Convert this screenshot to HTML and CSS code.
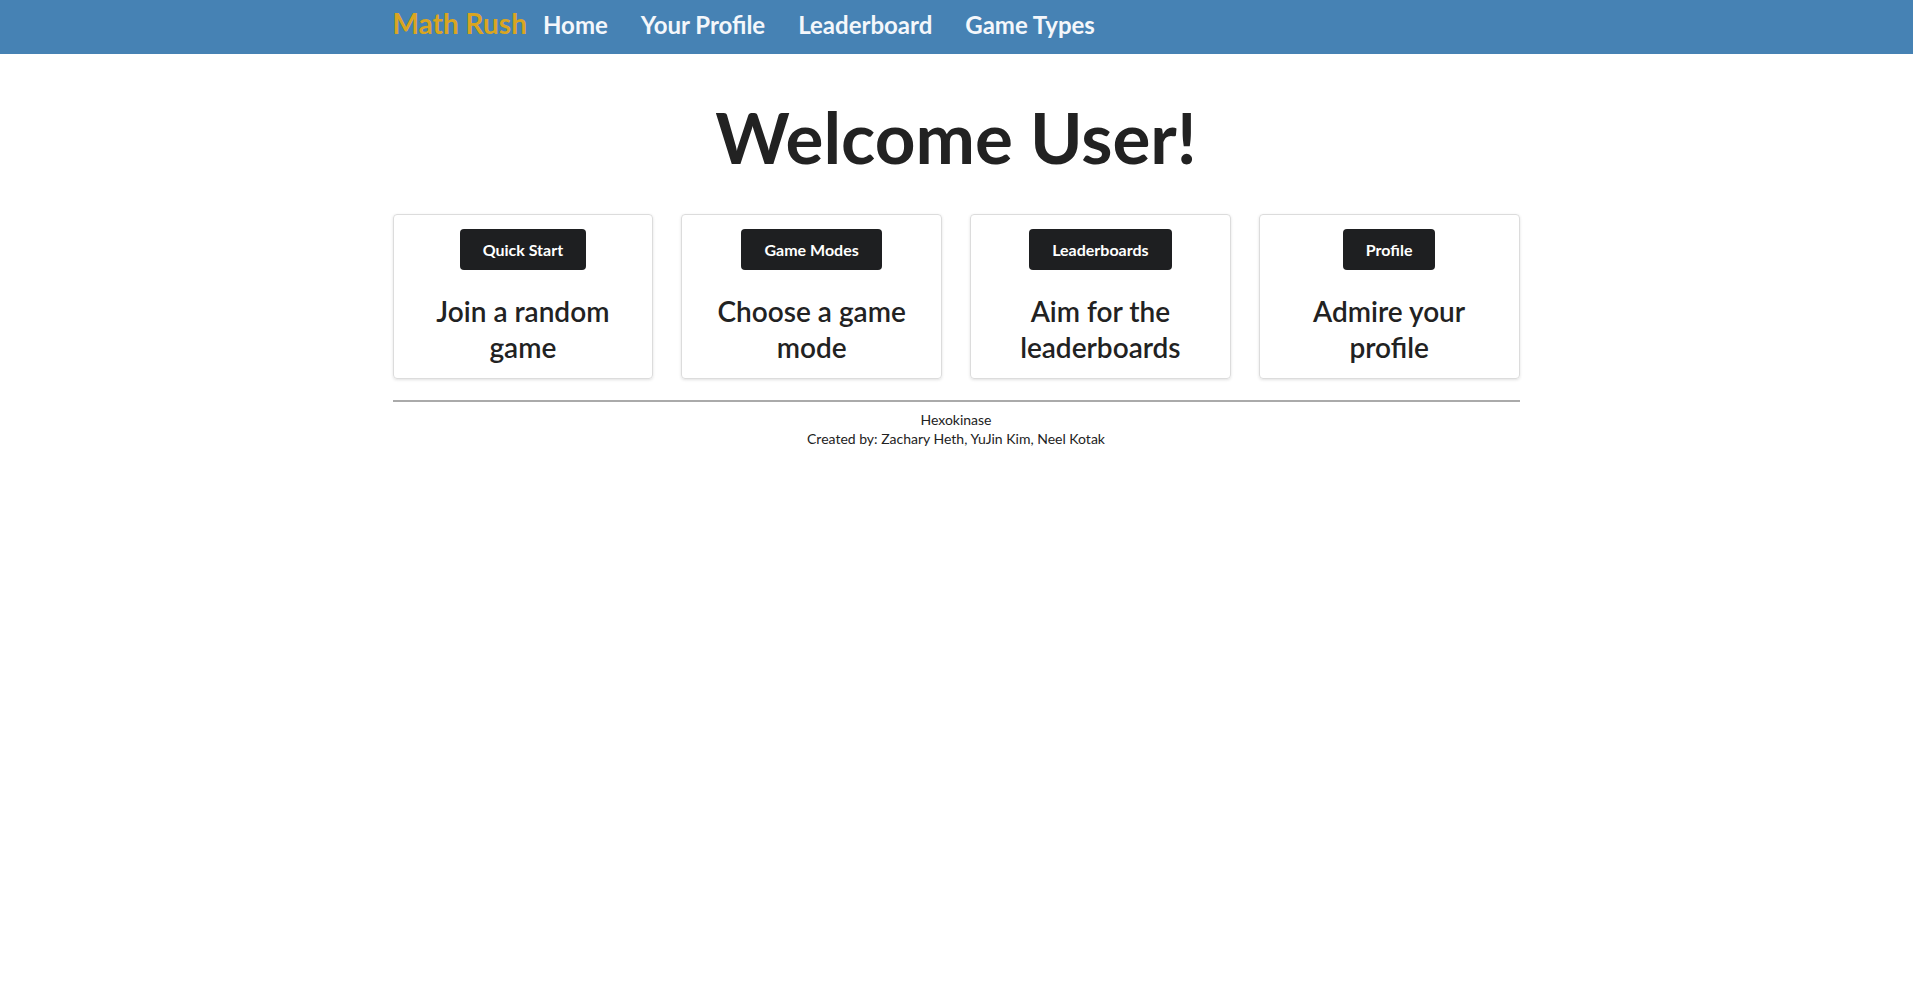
FILE: index.html
```html
<!DOCTYPE html>
<html lang="en">
<head>
<meta charset="utf-8">
<title>Math Rush</title>
<link rel="stylesheet" href="styles.css">
</head>
<body>
<nav class="navbar">
  <div class="container nav-inner">
    <a class="brand" href="#">Math Rush</a>
    <a class="nav-link" href="#">Home</a>
    <a class="nav-link" href="#">Your Profile</a>
    <a class="nav-link" href="#">Leaderboard</a>
    <a class="nav-link" href="#">Game Types</a>
  </div>
</nav>
<main class="container">
  <h1 class="title">Welcome User!</h1>
  <div class="cards">
    <div class="card">
      <button class="btn">Quick Start</button>
      <h3 class="card-text">Join a random game</h3>
    </div>
    <div class="card">
      <button class="btn">Game Modes</button>
      <h3 class="card-text">Choose a game mode</h3>
    </div>
    <div class="card">
      <button class="btn">Leaderboards</button>
      <h3 class="card-text">Aim for the leaderboards</h3>
    </div>
    <div class="card">
      <button class="btn">Profile</button>
      <h3 class="card-text">Admire your profile</h3>
    </div>
  </div>
  <hr class="rule">
  <footer class="footer">
    <div>Hexokinase</div>
    <div>Created by: Zachary Heth, YuJin Kim, Neel Kotak</div>
  </footer>
</main>
</body>
</html>
```
FILE: styles.css
```css
* { box-sizing: border-box; }
body {
  margin: 0;
  font-family: Lato, "Open Sans", sans-serif;
  color: #212121;
  background: #fff;
}
.container {
  width: 1128px;
  margin: 0 auto;
  padding-right: 1px;
}
.navbar {
  background: #4682b4;
  height: 54px;
}
.nav-inner {
  display: flex;
  align-items: center;
  height: 54px;
  padding-bottom: 6px;
}
.brand {
  color: #daa520;
  font-size: 28px;
  font-weight: 700;
  text-decoration: none;
  margin-right: 16px;
  margin-top: -3px;
}
.nav-link {
  color: #f4f7fb;
  font-size: 24px;
  font-weight: 700;
  text-decoration: none;
  margin-right: 33px;
}
.title {
  margin: 40px 0 35px;
  text-align: center;
  font-size: 71px;
  font-weight: 700;
  line-height: 1.2;
  color: #222;
}
.cards {
  display: grid;
  grid-template-columns: repeat(4, 1fr);
  gap: 28px;
}
.card {
  border: 1px solid #dcdcdc;
  border-radius: 4px;
  box-shadow: 0 1px 3px rgba(0,0,0,0.12);
  display: flex;
  flex-direction: column;
  align-items: center;
  padding: 14px 20px 13px;
  height: 165px;
}
.btn {
  background: #1e1f21;
  color: #fff;
  border: none;
  border-radius: 4px;
  height: 41px;
  padding: 0 23px;
  font-family: Lato, sans-serif;
  font-size: 16px;
  font-weight: 700;
}
.card-text {
  margin: 23px 0 0;
  font-size: 28px;
  font-weight: 600;
  line-height: 36px;
  text-align: center;
  color: #222;
}
.rule {
  margin: 21px 0 0;
  border: none;
  border-top: 2px solid #aaa;
}
.footer {
  text-align: center;
  font-size: 14px;
  line-height: 18.5px;
  color: #222;
  padding-top: 9px;
}
```
